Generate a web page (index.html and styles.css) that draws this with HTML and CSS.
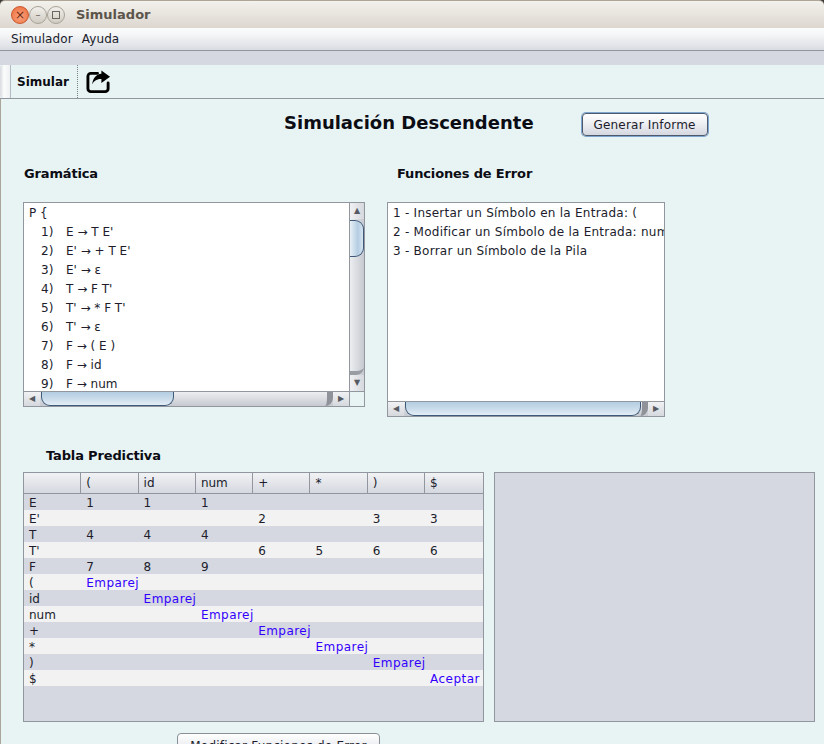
FILE: index.html
```html
<!DOCTYPE html>
<html lang="es">
<head>
  <meta charset="UTF-8">
  <title>Simulador</title>
  <link rel="stylesheet" href="styles.css">
</head>
<body>
  <div class="window">
    <!-- Title bar -->
    <div class="titlebar">
      <div class="win-buttons">
        <span class="win-btn close">&#215;</span>
        <span class="win-btn">&#8211;</span>
        <span class="win-btn"><i class="max-box"></i></span>
      </div>
      <span class="win-title">Simulador</span>
    </div>

    <div class="menubar">
      <span>Simulador</span>
      <span>Ayuda</span>
    </div>
    <div class="strip"></div>

    <div class="toolbar">
      <div class="tab-handle"></div>
      <span class="tab-label">Simular</span>
      <div class="tool-sep"></div>
      <svg class="share-icon" width="25" height="25" viewBox="0 0 26 26">
        <path d="M12 4.5H5a3 3 0 0 0-3 3v13a3 3 0 0 0 3 3h15a3 3 0 0 0 3-3v-6" fill="none" stroke="#000" stroke-width="3" stroke-linecap="round"/>
        <path d="M16 1.5 25 8l-9 6.500v-4c-4.500 0-7.500 1.500-9.500 5.500 0.500-6 4-10.500 9.500-11z" fill="#000"/>
      </svg>
    </div>

    <div class="main">
      <div class="title-row">
        <h1>Simulación Descendente</h1>
        <button class="btn btn-focus">Generar Informe</button>
      </div>

      <div class="top-panels">
        <section class="panel-grammar">
          <h2>Gramática</h2>
          <div class="scroll-box grammar-box">
            <div class="box-top">
              <div class="box-text">
                <div class="line">P {</div>
                <div class="line prod"><span>1)</span><span>E → T E'</span></div>
                <div class="line prod"><span>2)</span><span>E' → + T E'</span></div>
                <div class="line prod"><span>3)</span><span>E' → ε</span></div>
                <div class="line prod"><span>4)</span><span>T → F T'</span></div>
                <div class="line prod"><span>5)</span><span>T' → * F T'</span></div>
                <div class="line prod"><span>6)</span><span>T' → ε</span></div>
                <div class="line prod"><span>7)</span><span>F → ( E )</span></div>
                <div class="line prod"><span>8)</span><span>F → id</span></div>
                <div class="line prod"><span>9)</span><span>F → num</span></div>
              </div>
              <div class="vbar">
                <div class="arrow">&#9650;</div>
                <div class="vtrack"><div class="vthumb"></div></div>
                <div class="arrow">&#9660;</div>
              </div>
            </div>
            <div class="hbar-row">
              <div class="hbar">
                <div class="arrow">&#9664;</div>
                <div class="htrack"><div class="hthumb short"></div></div>
                <div class="arrow">&#9654;</div>
              </div>
              <div class="corner"></div>
            </div>
          </div>
        </section>

        <section class="panel-errors">
          <h2>Funciones de Error</h2>
          <div class="scroll-box errors-box">
            <div class="box-top">
              <div class="box-text">
                <div class="line">1 - Insertar un Símbolo en la Entrada: (</div>
                <div class="line">2 - Modificar un Símbolo de la Entrada: num</div>
                <div class="line">3 - Borrar un Símbolo de la Pila</div>
              </div>
            </div>
            <div class="hbar">
              <div class="arrow">&#9664;</div>
              <div class="htrack"><div class="hthumb long"></div></div>
              <div class="arrow">&#9654;</div>
            </div>
          </div>
        </section>
      </div>

      <h2 class="table-heading">Tabla Predictiva</h2>
      <div class="bottom-panels">
        <div class="table-box">
          <table>
            <thead>
              <tr><th></th><th>(</th><th>id</th><th>num</th><th>+</th><th>*</th><th>)</th><th>$</th></tr>
            </thead>
            <tbody>
              <tr><td>E</td><td>1</td><td>1</td><td>1</td><td></td><td></td><td></td><td></td></tr>
              <tr><td>E'</td><td></td><td></td><td></td><td>2</td><td></td><td>3</td><td>3</td></tr>
              <tr><td>T</td><td>4</td><td>4</td><td>4</td><td></td><td></td><td></td><td></td></tr>
              <tr><td>T'</td><td></td><td></td><td></td><td>6</td><td>5</td><td>6</td><td>6</td></tr>
              <tr><td>F</td><td>7</td><td>8</td><td>9</td><td></td><td></td><td></td><td></td></tr>
              <tr><td>(</td><td class="act">Emparejar</td><td></td><td></td><td></td><td></td><td></td><td></td></tr>
              <tr><td>id</td><td></td><td class="act">Emparejar</td><td></td><td></td><td></td><td></td><td></td></tr>
              <tr><td>num</td><td></td><td></td><td class="act">Emparejar</td><td></td><td></td><td></td><td></td></tr>
              <tr><td>+</td><td></td><td></td><td></td><td class="act">Emparejar</td><td></td><td></td><td></td></tr>
              <tr><td>*</td><td></td><td></td><td></td><td></td><td class="act">Emparejar</td><td></td><td></td></tr>
              <tr><td>)</td><td></td><td></td><td></td><td></td><td></td><td class="act">Emparejar</td><td></td></tr>
              <tr><td>$</td><td></td><td></td><td></td><td></td><td></td><td></td><td class="act">Aceptar</td></tr>
            </tbody>
          </table>
        </div>
        <div class="stack-box"></div>
      </div>

      <div class="bottom-action">
        <button class="btn btn-wide">Modificar Funciones de Error</button>
      </div>
    </div>
  </div>
</body>
</html>
```

FILE: styles.css
```css
html, body {
  margin: 0;
  padding: 0;
  height: 744px;
  overflow: hidden;
  background-color: #3c3b37;
}

.window {
  width: 824px;
  height: 744px;
  overflow: hidden;
  display: flex;
  flex-direction: column;
  font-family: "DejaVu Sans", sans-serif;
  font-size: 12px;
  color: #201c2c;
}

.titlebar {
  height: 27px;
  flex: none;
  display: flex;
  align-items: center;
  border-top: 1px solid #b0a698;
  border-radius: 5px 5px 0 0;
  background: linear-gradient(#f3f1ec, #dcd7cf);
}

.win-buttons {
  display: flex;
  margin-left: 11px;
}

.win-btn {
  width: 16px;
  height: 16px;
  border-radius: 50%;
  border: 1px solid #a8a298;
  background: linear-gradient(#f2f0ec, #d0cbc2);
  color: #6b665e;
  font-size: 10px;
  line-height: 16px;
  text-align: center;
  display: flex;
  align-items: center;
  justify-content: center;
}

.win-btn.close {
  border-color: #c9572c;
  background: radial-gradient(circle at 50% 60%, #f9a27c, #ec6a3a);
  color: #6e2c14;
  font-size: 12px;
}

.max-box {
  width: 6px;
  height: 6px;
  border: 1px solid #6b665e;
}

.win-title {
  margin-left: 11px;
  font-weight: bold;
  font-size: 13px;
  color: #5c544b;
}

.menubar {
  height: 22px;
  flex: none;
  display: flex;
  gap: 9px;
  align-items: center;
  padding-left: 11px;
  letter-spacing: 0.1px;
  background: linear-gradient(#fbfdfd, #f4f6f7 30%, #d9dce2);
  border-bottom: 1px solid #92969e;
}

.strip {
  height: 14px;
  flex: none;
  background-color: #d5d8e0;
}

.toolbar {
  height: 33px;
  flex: none;
  display: flex;
  align-items: center;
  background-color: #e8f4f4;
  border-bottom: 1px solid #92969e;
}

.tab-handle {
  width: 10px;
  height: 100%;
  flex: none;
  background: linear-gradient(90deg, #d8dbe0, #fbfcfc 40%, #eef0f2);
  border-right: 1px solid #b4bcc4;
  border-radius: 3px 0 0 3px;
}

.tab-label {
  margin-left: 6px;
  font-weight: bold;
  font-size: 12px;
  color: #0c0c14;
  width: 60px;
}

.tool-sep {
  height: 100%;
  border-left: 1px dotted #7a8088;
}

.share-icon {
  margin-left: 8px;
}

.main {
  flex: 1;
  min-height: 0;
  background-color: #e8f4f4;
  border-left: 1px solid #aca59a;
}

.title-row {
  display: flex;
  align-items: flex-start;
  gap: 48px;
  margin-top: 13px;
  padding-left: 283px;
  height: 26px;
}

h1 {
  margin: 0;
  font-size: 18px;
  font-weight: bold;
  color: #0c0c14;
}

h2 {
  margin: 0 0 20px;
  height: 17px;
  line-height: 17px;
  font-size: 13px;
  font-weight: bold;
  letter-spacing: -0.15px;
  color: #0c0c14;
}

.btn {
  font-family: inherit;
  font-size: 12px;
  letter-spacing: 0.2px;
  color: #201c2c;
  height: 26px;
  padding: 0;
  border: 1px solid #8a8f98;
  border-radius: 4px;
  background: linear-gradient(#ffffff, #f0f1f4 40%, #d5d8e0);
}

.btn-focus {
  width: 126px;
  height: 23px;
  margin-top: 1px;
  border: 1px solid #4d5a6c;
  box-shadow: 0 0 0 1px #7ea6d0;
}

.top-panels {
  display: flex;
  gap: 22px;
  margin-top: 27px;
  padding-left: 22px;
}

.panel-grammar {
  width: 342px;
}

.panel-grammar h2 {
  padding-left: 1px;
}

.panel-errors {
  width: 278px;
}

.panel-errors h2 {
  padding-left: 10px;
}

.scroll-box {
  box-sizing: border-box;
  display: flex;
  flex-direction: column;
  border: 1px solid #92969e;
}

.grammar-box {
  height: 205px;
}

.errors-box {
  height: 215px;
}

.errors-box .line {
  letter-spacing: 0.25px;
}

.box-top {
  flex: 1;
  min-height: 0;
  display: flex;
}

.box-text {
  flex: 1;
  min-width: 0;
  overflow: hidden;
  padding: 1px 0 0 5px;
  background-color: #fff;
}

.line {
  height: 19px;
  line-height: 19px;
  white-space: nowrap;
}

.prod {
  display: flex;
}

.prod span:first-child {
  width: 25px;
  margin-left: 12px;
}

.vbar {
  width: 15px;
  flex: none;
  display: flex;
  flex-direction: column;
  border-left: 1px solid #92969e;
  box-sizing: border-box;
  background: linear-gradient(90deg, #eceef0, #c6c9d0);
}

.arrow {
  width: 16px;
  height: 16px;
  flex: none;
  text-align: center;
  font-size: 8px;
  line-height: 16px;
  color: #555a62;
  background: linear-gradient(#f0f1f3, #d5d8dd);
}

.vbar .arrow {
  width: 14px;
  background: linear-gradient(90deg, #f0f1f3, #d5d8dd);
}

.vtrack {
  flex: 1;
  padding-top: 1px;
  border-bottom: 4px solid #9a9da4;
  border-radius: 0 0 8px 0;
}

.vthumb {
  box-sizing: border-box;
  height: 37px;
  border: 1px solid #3f5a78;
  border-left: none;
  border-radius: 0 9px 9px 0;
  background: linear-gradient(90deg, #e9f0f6, #b4cde2 60%, #d6e4f0);
}

.hbar-row {
  display: flex;
  flex: none;
}

.hbar {
  flex: none;
  height: 15px;
  display: flex;
  box-sizing: border-box;
  border-top: 1px solid #92969e;
  background: linear-gradient(#eceef0, #c6c9d0);
}

.hbar-row .hbar {
  flex: 1;
  min-width: 0;
}

.hbar .arrow {
  height: 14px;
  line-height: 14px;
}

.htrack {
  flex: 1;
  display: flex;
  padding-left: 1px;
  border-right: 6px solid #8f9299;
  border-radius: 0 0 8px 0;
}

.hthumb {
  box-sizing: border-box;
  height: 100%;
  border: 1px solid #3f5a78;
  border-top: none;
  border-radius: 0 0 9px 9px;
  background: linear-gradient(#b4cde2, #c8dbea 50%, #e4eef6);
}

.hthumb.short {
  width: 133px;
}

.hthumb.long {
  width: 236px;
}

.corner {
  width: 15px;
  flex: none;
  border-left: 1px solid #92969e;
  border-top: 1px solid #92969e;
  box-sizing: border-box;
}

.table-heading {
  margin: 30px 0 8px;
  padding-left: 45px;
}

.bottom-panels {
  display: flex;
  gap: 10px;
  padding-left: 22px;
}

.table-box, .stack-box {
  box-sizing: border-box;
  height: 250px;
  border: 1px solid #92969e;
  background-color: #d5d8e0;
}

.table-box {
  width: 461px;
  overflow: hidden;
}

.stack-box {
  width: 321px;
}

table {
  width: 459px;
  table-layout: fixed;
  border-collapse: separate;
  border-spacing: 0;
}

th, td {
  padding: 0 0 0 5px;
  overflow: hidden;
  white-space: nowrap;
  text-align: left;
  font-weight: normal;
}

th {
  width: 57.3px;
  height: 21px;
  box-sizing: border-box;
  border-right: 1px solid #92969e;
  border-bottom: 1px solid #92969e;
  background: linear-gradient(#f1f2f4, #d5d8e0);
}

th:last-child {
  width: auto;
  border-right: none;
}

td {
  box-sizing: border-box;
  height: 16px;
  padding-top: 2px;
  line-height: 14px;
}

tbody tr:nth-child(even) {
  background-color: #f2f2f2;
}

.act {
  color: #3300ff;
  letter-spacing: 0.45px;
}

.bottom-action {
  margin-top: 11px;
  padding-left: 176px;
}

.btn-wide {
  width: 203px;
}
```
